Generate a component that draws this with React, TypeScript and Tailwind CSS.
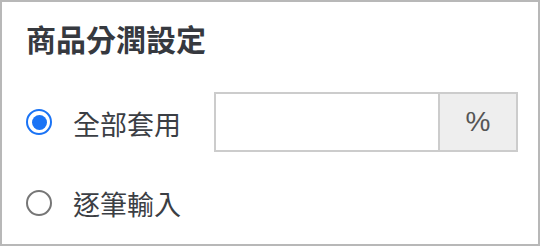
import React, { useState } from 'react';

export default function App() {
  const [mode, setMode] = useState<'all' | 'each'>('all');
  const [value, setValue] = useState('');

  const font = { fontFamily: '"Noto Sans CJK TC", "Noto Sans", sans-serif' };

  return (
    <div
      className="w-[540px] h-[246px] border-2 border-[#b8b8b8] bg-white pl-[24px] pt-[17px] text-[#3b3e44]"
      style={font}
    >
      <h2 className="text-[30px] leading-[38px] font-bold text-[#36393f]">商品分潤設定</h2>

      <div className="mt-[35px] flex items-center h-[60px]">
        <label className="flex items-center cursor-pointer w-[188px]" onClick={() => setMode('all')}>
          <span
            className={`w-[26px] h-[26px] rounded-full border-[2.5px] flex items-center justify-center ${
              mode === 'all' ? 'border-[#1a73f5]' : 'border-[#767676]'
            }`}
          >
            {mode === 'all' && <span className="w-[15px] h-[15px] rounded-full bg-[#1a73f5]" />}
          </span>
          <span className="ml-[21px] text-[27px] leading-[36px] pt-[3px]">全部套用</span>
        </label>
        <div className="flex h-[60px] w-[304px] border-2 border-[#cccccc]">
          <input
            value={value}
            onChange={(e) => setValue(e.target.value)}
            className="flex-1 min-w-0 outline-none px-3 text-[24px]"
          />
          <span className="w-[78px] border-l-2 border-[#cccccc] bg-[#eeeeee] flex items-center justify-center text-[28px] text-[#555555]" style={{ fontFamily: '"Liberation Sans", sans-serif' }}>
            %
          </span>
        </div>
      </div>

      <label className="mt-[31px] flex items-center cursor-pointer" onClick={() => setMode('each')}>
        <span
          className={`w-[26px] h-[26px] rounded-full border-[2.5px] flex items-center justify-center ${
            mode === 'each' ? 'border-[#1a73f5]' : 'border-[#767676]'
          }`}
        >
          {mode === 'each' && <span className="w-[15px] h-[15px] rounded-full bg-[#1a73f5]" />}
        </span>
        <span className="ml-[21px] text-[27px] leading-[36px] pt-[3px]">逐筆輸入</span>
      </label>
    </div>
  );
}
